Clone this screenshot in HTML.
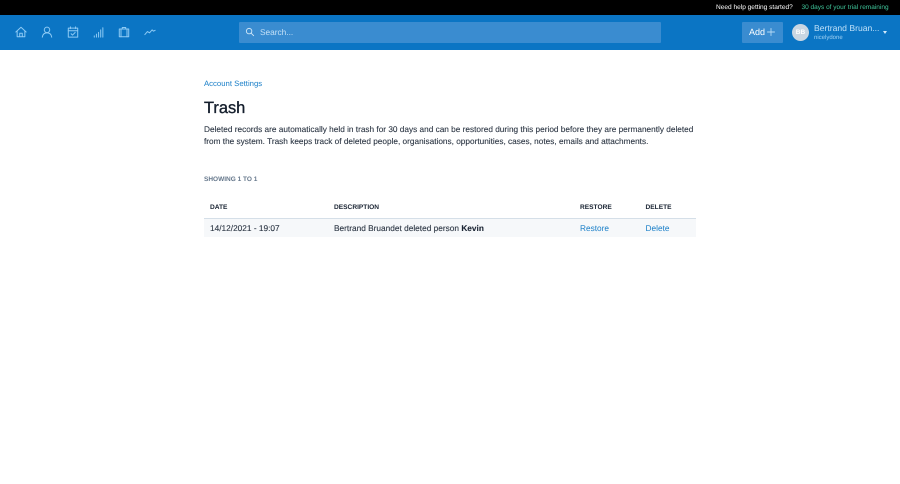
<!DOCTYPE html>
<html><head><meta charset="utf-8"><style>
*{box-sizing:border-box}
html,body{margin:0;padding:0;background:#fff}
body{width:900px;height:484px;overflow:hidden;position:relative;font-family:"Liberation Sans",sans-serif;color:#1a2433;text-rendering:geometricPrecision}
.a{position:absolute;white-space:nowrap}
svg{position:absolute;fill:none;stroke:#8fcbf5;stroke-width:1.15;stroke-linecap:round;stroke-linejoin:round}
.h{font-size:6.6px;line-height:8px;font-weight:bold;color:#1a2433}
.t{font-size:8.3px;line-height:12px;color:#2a3442;-webkit-text-stroke:.1px #2a3442}
.l{font-size:8.3px;line-height:12px;color:#1a7fc8}
</style></head><body>
<div class="a" style="left:0;top:0;width:900px;height:14.500px;background:#000"></div>
<div class="a" style="left:716px;top:3px;font-size:6.55px;line-height:9px;color:#fff">Need help getting started?</div>
<div class="a" style="left:801.500px;top:3px;font-size:6.5px;line-height:9px;color:#3fc59a">30 days of your trial remaining</div>
<div class="a" style="left:0;top:14.500px;width:900px;height:35.500px;background:#0b75c4"></div>

<svg style="left:15px;top:26px" width="12" height="12" viewBox="0 0 14 14"><path d="M1 7L7 1.500 13 7M2.500 6V12.500H11.500V6M5.500 12.500V8.500H8.500V12.500"/></svg>
<svg style="left:41px;top:26px" width="12" height="12" viewBox="0 0 14 14"><circle cx="7" cy="4.500" r="3.200"/><path d="M1.500 13C2 9.500 4 8 7 8s5 1.500 5.500 5"/></svg>
<svg style="left:67px;top:26px" width="12" height="12" viewBox="0 0 14 14"><rect x="1.500" y="2.500" width="11" height="10.500"/><path d="M1.500 5.500H12.500M4 1V3M10 1V3M4.800 9L6.500 10.600 9.500 7.600"/></svg>
<svg style="left:93px;top:26px" width="12" height="12" viewBox="0 0 14 14"><path d="M1.500 13V11.500M4 13V9.500M6.500 13V7.500M9 13V4.500M11.500 13V2"/></svg>
<svg style="left:118px;top:26px" width="12" height="12" viewBox="0 0 14 14"><rect x="1.500" y="3.500" width="11" height="9"/><path d="M3.500 3.500V12.500M10.500 3.500V12.500M5 3.500V1.800H9V3.500"/></svg>
<svg style="left:144px;top:26px" width="12" height="12" viewBox="0 0 14 14"><path d="M1 10L4 6.500 6.500 8 9.500 4.500 11 6 13 5"/></svg>

<div class="a" style="left:239px;top:22px;width:422px;height:21px;background:#3a8cd0;border-radius:1px"></div>
<svg style="left:245px;top:27px;stroke:#cfe6f8;stroke-width:1" width="10" height="10" viewBox="0 0 11 11"><circle cx="4.500" cy="4.500" r="3"/><path d="M6.800 6.800L9.500 9.500"/></svg>
<div class="a" style="left:260px;top:27px;font-size:8.3px;line-height:11px;color:#c3e0f7">Search...</div>

<div class="a" style="left:742px;top:22px;width:41px;height:21px;background:#3a8cd0;border-radius:1px"></div>
<div class="a" style="left:749px;top:27px;font-size:9px;line-height:11px;color:#fff">Add</div>
<svg style="left:767px;top:28px;stroke:#b5daf5;stroke-width:1" width="8" height="8" viewBox="0 0 9 9"><path d="M4.500 .5V8.500M.5 4.500H8.500"/></svg>
<div class="a" style="left:792px;top:24px;width:17px;height:17px;border-radius:50%;background:#c9d6e2;color:#fff;font-size:6.500px;line-height:17px;text-align:center;font-weight:bold">BB</div>
<div class="a" style="left:814px;top:23px;font-size:8.6px;line-height:11px;color:#bfe0f8">Bertrand Bruan...</div>
<div class="a" style="left:814px;top:34px;font-size:6px;line-height:8px;color:#9fd0f2">nicelydone</div>
<div class="a" style="left:882.500px;top:31px;width:0;height:0;border-left:2.500px solid transparent;border-right:2.500px solid transparent;border-top:3px solid #d5ebfa"></div>

<div class="a" style="left:204px;top:78px;font-size:7.75px;line-height:11px;color:#1a7fc8">Account Settings</div>
<div class="a" style="left:204px;top:96.500px;font-size:16.4px;line-height:22px;color:#141e2c;-webkit-text-stroke:.35px #141e2c">Trash</div>
<div class="a t" style="left:204px;top:123.500px;font-size:8.25px;line-height:12.300px">Deleted records are automatically held in trash for 30 days and can be restored during this period before they are permanently deleted<br>from the system. Trash keeps track of deleted people, organisations, opportunities, cases, notes, emails and attachments.</div>
<div class="a" style="left:204px;top:175.500px;font-size:6.500px;line-height:8px;font-weight:bold;color:#66788c">SHOWING 1 TO 1</div>

<div class="a h" style="left:210px;top:203.500px">DATE</div>
<div class="a h" style="left:334px;top:203.500px">DESCRIPTION</div>
<div class="a h" style="left:580px;top:203.500px">RESTORE</div>
<div class="a h" style="left:645.500px;top:203.500px">DELETE</div>

<div class="a" style="left:204px;top:218px;width:492px;height:19px;background:#f6f8fa;border-top:1px solid #d5dfe8"></div>
<div class="a t" style="left:210px;top:222px">14/12/2021 - 19:07</div>
<div class="a t" style="left:334px;top:222px">Bertrand Bruandet deleted person <b style="color:#1a2433">Kevin</b></div>
<div class="a l" style="left:580px;top:222px">Restore</div>
<div class="a l" style="left:645.500px;top:222px">Delete</div>
</body></html>
